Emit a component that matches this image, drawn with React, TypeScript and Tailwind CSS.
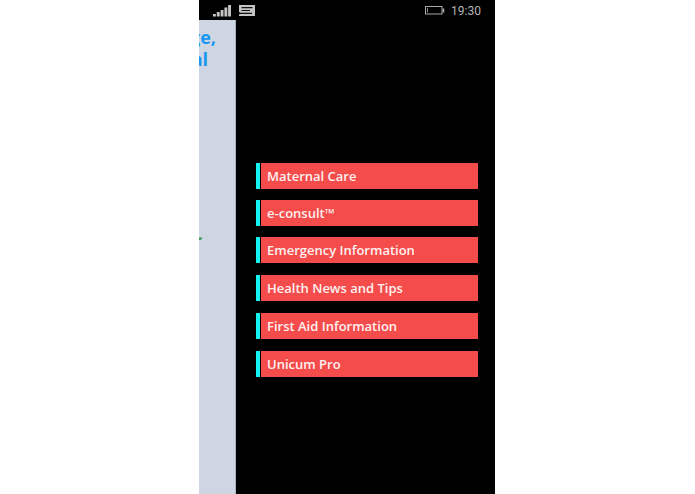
import React from "react";

const menuItems = [
    { text: "Maternal Care", margin: "mt-0" },
    { text: "e-consult™", margin: "mt-[11px]" },
    { text: "Emergency Information", margin: "mt-[11px]" },
    { text: "Health News and Tips", margin: "mt-3" },
    { text: "First Aid Information", margin: "mt-3" },
    { text: "Unicum Pro", margin: "mt-3" },
];

const StatusBar = () => {
    return (
        <header className="flex h-5 items-center justify-between bg-black px-[14px] pt-px">
            <div className="flex items-center gap-2">
                {/* signal  */}
                <svg width="18" height="12" viewBox="0 0 18 12" fill="#c4c4c4">
                    <rect x="0" y="9" width="2.9" height="2.5" />
                    <rect x="3.8" y="7" width="2.9" height="4.5" />
                    <rect x="7.6" y="5" width="2.9" height="6.5" />
                    <rect x="11.4" y="2.5" width="2.9" height="9" />
                    <rect x="15.1" y="0" width="2.9" height="11.5" />
                </svg>
                {/* message  */}
                <svg width="16" height="11" viewBox="0 0 16 11">
                    <path d="M0 0H16V11H0V9.4L2 8.2L0 7Z" fill="#c4c4c4" />
                    <path
                        d="M2.5 2.7H13.5M2.5 5.5H11M1 8.3H13"
                        stroke="#111"
                        strokeWidth="1.2"
                    />
                </svg>
            </div>
            <div className="flex items-center gap-[6px]">
                {/* battery  */}
                <svg width="20" height="9" viewBox="0 0 20 9">
                    <rect
                        x="0.5"
                        y="0.5"
                        width="16.5"
                        height="7.5"
                        fill="none"
                        stroke="#a8a8a8"
                    />
                    <rect x="2" y="2" width="1" height="4.5" fill="#888" />
                    <rect x="17.5" y="2.5" width="1.8" height="4" fill="#a8a8a8" />
                </svg>
                <p className="font-['Roboto',sans-serif] text-[12px] leading-4 text-[#b4b4b4]">
                    19:30
                </p>
            </div>
        </header>
    );
};

const App = () => {
    return (
        <div className="grid min-h-screen grid-cols-[199fr_296fr_200fr] bg-white font-['Open_Sans','Noto_Sans',sans-serif]">
            <main className="col-start-2 flex flex-col overflow-hidden bg-black">
                <StatusBar />
                <div className="flex grow">
                    {/* edge of the previous page  */}
                    <section className="flex w-[37px] shrink-0 flex-col overflow-hidden border-r border-[#a9afbd] bg-[#ced5e3]">
                        <div className="flex flex-col pt-[6px] text-[18px] font-bold leading-[22px] text-[#1696f2]">
                            <p className="flex justify-end pr-[19px]">ge,</p>
                            <p className="flex justify-end pr-[27px]">al</p>
                        </div>
                        <svg
                            className="mt-[167px]"
                            width="4"
                            height="4"
                            viewBox="0 0 4 4"
                        >
                            <path d="M0 0.5H3.5L2 3H0Z" fill="#3f9a5c" />
                        </svg>
                    </section>
                    <nav className="flex grow flex-col pl-5 pr-[17px] pt-[143px]">
                        {menuItems.map((item, i) => (
                            <button
                                key={i}
                                type="button"
                                className={`${item.margin} flex h-[26px] gap-px text-left`}
                            >
                                <span className="h-full w-1 bg-[#12f3f0]" />
                                <span className="h-full grow bg-[#f44b4b] pl-[6px] text-[13px] font-semibold leading-[27px] text-[#fff1f0]">
                                    {item.text}
                                </span>
                            </button>
                        ))}
                    </nav>
                </div>
            </main>
        </div>
    );
};

export default App;
